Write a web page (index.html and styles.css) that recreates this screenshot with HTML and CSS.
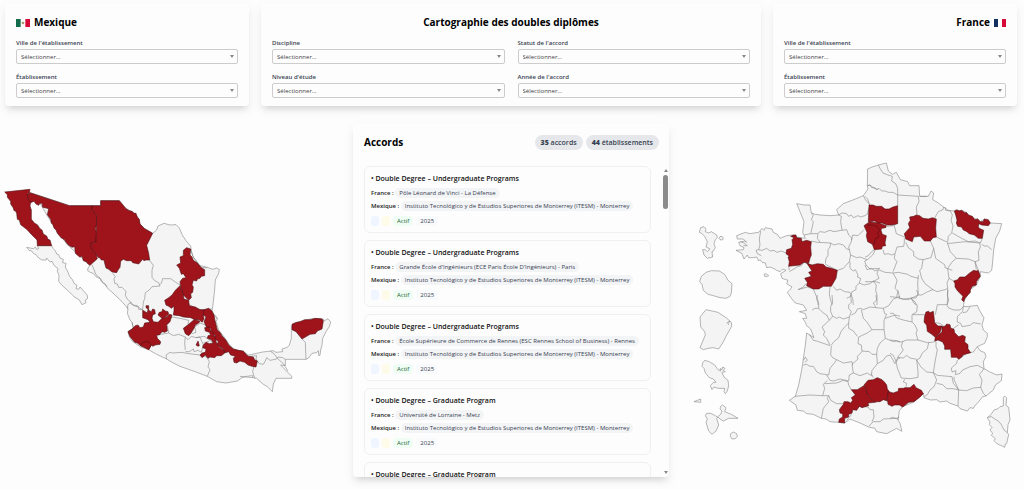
FILE: index.html
```html
<!DOCTYPE html>
<html lang="fr">
<head>
<meta charset="utf-8">
<title>Cartographie des doubles diplômes</title>
<link rel="stylesheet" href="styles.css">
</head>
<body>
<header class="filters">
  <section class="card">
    <h2 class="heading"><svg class="flag" viewBox="0 0 42 24"><path fill="#fff" d="M0 0h42v24H0z"/><path fill="#126b4b" d="M0 0h14v24H0z"/><path fill="#d60b39" d="M28 0h14v24H28z"/><circle cx="21" cy="12" r="4" fill="#a79a72"/></svg>Mexique</h2>
    <div class="fields">
      <div class="field"><label for="mv">Ville de l'établissement</label><select id="mv"><option>Sélectionner...</option></select></div>
      <div class="field"><label for="me">Établissement</label><select id="me"><option>Sélectionner...</option></select></div>
    </div>
  </section>
  <section class="card">
    <h1 class="heading heading-center">Cartographie des doubles diplômes</h1>
    <div class="fields fields-two">
      <div class="field"><label for="di">Discipline</label><select id="di"><option>Sélectionner...</option></select></div>
      <div class="field"><label for="st">Statut de l'accord</label><select id="st"><option>Sélectionner...</option></select></div>
      <div class="field"><label for="ni">Niveau d'étude</label><select id="ni"><option>Sélectionner...</option></select></div>
      <div class="field"><label for="an">Année de l'accord</label><select id="an"><option>Sélectionner...</option></select></div>
    </div>
  </section>
  <section class="card">
    <h2 class="heading heading-end">France<svg class="flag flag-fr" viewBox="0 0 36 24"><path fill="#fff" d="M0 0h36v24H0z"/><path fill="#12305f" d="M0 0h12v24H0z"/><path fill="#d60b39" d="M24 0h12v24H24z"/></svg></h2>
    <div class="fields">
      <div class="field"><label for="fv">Ville de l'établissement</label><select id="fv"><option>Sélectionner...</option></select></div>
      <div class="field"><label for="fe">Établissement</label><select id="fe"><option>Sélectionner...</option></select></div>
    </div>
  </section>
</header>
<main class="content">
  <svg class="map" viewBox="0 -168 1059 1059" role="img" aria-label="Carte du Mexique">
    <path class="land" d="M112 197L155 197 160 206 166 212 170 222 176 224 180 234 190 238 188 248 198 250 196 262 204 276 208 288 218 300 222 310 231 316 228 326 236 328 240 321 252 334 262 346 263 356 256 360 258 368 246 374 238 360 222 350 214 342 206 334 186 316 176 304 177 286 172 274 174 266 162 256 156 244 150 246 140 234 138 240 126 240 116 234 108 224 100 220 94 212 88 212 80 202 100 206 106 201 110 208 116 206Z"/>
    <path class="land" d="M90 38L208 77 302 77 302 62 358 62 378 86 402 98 414 112 420 132 434 146 458 160 470 150 474 138 492 130 510 135 528 134 538 144 547 165 558 182 565 190 572 198 574 214 580 232 592 246 598 256 622 262 638 268 650 264 658 268 656 280 646 300 643 340 638 380 636 394 646 410 652 418 648 424 656 450 672 470 688 494 702 507 710 510 730 515 746 525 770 520 788 516 806 514 820 512 828 517 848 515 846 507 862 502 868 495 874 475 874 440 880 430 900 425 930 417 960 415 970 417 972 423 984 416 992 426 988 440 978 455 968 475 966 495 962 510 960 526 956 526 955 512 950 518 936 520 926 534 918 538 856 538 856 557 842 555 875 589 875 595 828 595 820 612 817 635 802 620 790 613 770 595 758 593 758 587 740 589 726 593 712 603 678 609 650 605 622 589 580 573 540 559 516 547 500 537 470 523 446 509 422 501 396 483 388 470 384 455 400 445 396 427 390 420 382 400 384 386 366 365 342 342 320 322 316 312 304 304 300 296 288 290 280 280 272 278 263 272 264 264 270 256 200 192 152 124 120 70 82 44Z"/>
    <g class="border">
      <path d="M276 254L288 284 302 296 308 308 322 320M338 280L346 290 342 296 344 310 352 312 356 322 366 322 372 328 378 334 376 346 382 358 390 364 392 370 404 378 414 380 416 388 428 388M448 240L460 256 456 270 456 292 464 302 476 308 478 314 484 310 488 296 512 296 526 306 540 315M478 314L480 318 456 320 448 330 436 338 434 356 430 366 428 388"/>
      <g transform="translate(360 165)">
        <path d="M22 222L24 208 34 202 38 210 52 212 62 222 70 226M36 262L40 280 24 290M212 42L218 62 224 72 236 88 244 98 262 98M206 208L220 216 240 224 276 222M110 300L146 294 142 272M146 294L160 302 176 298 196 306 194 324 196 345M140 372L138 360 150 352 158 354 186 352 200 355 240 360 260 366 268 380 264 396 270 404 262 424M142 262L156 246 180 250 206 256 204 268M196 306L204 314 214 304 228 308 240 306 250 330 244 352 234 346 222 350 220 342 208 350 196 350M216 296L228 292 224 276 240 264 262 272M228 308L252 304 262 310 280 324M250 324L268 318M402 392L398 410 404 430M360 424L398 428M390 364L410 362 408 372 418 386 430 388 436 378 440 368 450 376 470 372 474 366 488 368 496 373M450 348L462 356 472 370 490 386 504 408M546 312L556 322 558 373M284 240L290 246 292 252"/>
      </g>
    </g>
    <g class="active">
      <path d="M14 36L90 28 88 38 82 42 84 56 92 66 90 78 94 90 94 118 104 130 112 134 120 146 126 150 130 162 140 168 144 178 150 180 155 197 112 197 111 180 95 164 80 148 62 134 58 120 52 118 50 100 46 92 42 92 40 84 32 72 32 64 22 52 22 44Z"/>
      <path d="M90 38L208 77 276 77 276 88 290 106 290 134 286 146 290 158 288 186 274 188 272 196 278 212 288 222 292 236 270 256 262 250 260 246 250 242 246 228 240 232 226 220 224 200 216 202 204 194 192 178 184 174 172 160 168 150 162 144 158 132 154 130 152 118 142 104 146 86 138 84 128 82 126 70 120 70 116 76 108 72 102 64 92 68 84 56 82 44Z"/>
      <path d="M276 77L302 77 302 62 358 62 378 86 388 92 396 94 402 100 408 100 412 112 418 118 420 132 434 146 458 160 450 176 440 196 446 220 449 240 438 240 432 242 428 238 416 252 398 248 394 242 380 242 370 238 362 244 360 262 354 270 350 278 336 276 326 268 318 264 314 250 312 240 304 240 300 234 294 232 288 222 278 212 272 196 274 188 288 186 290 106 276 88Z"/>
      <g transform="translate(360 165)">
        <path d="M190 46L200 38 212 42 210 60 216 66 220 76 232 84 244 98 254 104 254 122 244 124 240 130 232 132 230 138 220 136 216 150 220 156 218 172 212 176 214 188 206 196 190 180 182 154 180 140 188 130 198 128 190 116 184 118 178 100 170 90 182 84 180 66 190 62Z"/>
        <path d="M134 196L146 188 156 180 166 166 180 152 184 162 190 180 192 192 206 196 208 212 226 216 240 224 250 224 258 228 250 240 252 252 246 262 238 254 224 254 212 248 190 246 178 242 160 240 162 226 162 214 154 220 146 214 138 210Z"/>
        <path d="M252 224L266 220 276 228 282 240 284 252 292 285 300 292 306 302 318 316 326 330 340 342 356 346 370 348 380 360 386 364 400 366 404 374 412 378 408 396 396 394 384 390 374 382 360 378 350 384 342 382 340 370 346 364 332 360 326 350 314 354 310 342 300 336 290 326 296 320 282 310 286 300 276 294 272 280 260 278 252 260 258 246 250 240Z"/>
        <path d="M190 280L206 268 222 254 240 258 236 264 226 270 222 280 212 296 206 302 196 296Z"/>
        <path d="M250 330L258 322 268 326 280 324 274 314 262 310 264 302 272 300 268 292 256 288 254 278 266 276 272 286 280 294 286 310 290 326 300 338 312 346 314 354 304 362 290 362 284 368 270 366 264 370 256 360 246 368 240 360 246 354 256 352 258 342 248 338Z"/>
        <path d="M234 318L238 332 234 334 228 330Z"/>
        <path d="M68 226L76 230 82 234 84 222 78 218 78 212 86 212 86 226 94 230 98 222 104 224 106 236 98 240 96 250 100 260 114 262 126 250 140 246 148 238 156 240 150 260 140 270 142 288 134 292 126 290 118 300 110 300 112 310 122 320 120 328 106 330 98 334 94 330 86 344 74 334 62 332 52 324 44 322 36 312 30 305 24 290 36 282 46 272 54 270 60 278 70 276 74 264 90 262 84 254 68 248Z"/>
        <path d="M114 240L118 232 126 230 128 222 136 228 144 230 146 238 136 246 126 250Z"/>
        <path d="M62 332L66 324 78 320 86 320 94 330 86 344Z"/>
        <path d="M516 268L530 262 540 260 554 254 570 254 586 250 606 252 610 258 606 282 592 288 586 296 570 298 560 304 546 312 528 290 516 284Z"/>
      </g>
    </g>
  </svg>

  <section class="card panel">
    <div class="panel-head">
      <h2 class="panel-title">Accords</h2>
      <span class="count"><b>35</b> accords</span>
      <span class="count"><b>44</b> établissements</span>
    </div>
    <div class="panel-body">
      <ul class="list">
        <li class="item"><h3>• Double Degree – Undergraduate Programs</h3>
          <p><b>France :</b> <span class="school">Pôle Léonard de Vinci - La Défense</span></p>
          <p><b>Mexique :</b> <span class="school">Instituto Tecnológico y de Estudios Superiores de Monterrey (ITESM) - Monterrey</span></p>
          <div class="tags"><i class="tag blue"></i><i class="tag yellow"></i><span class="tag green">Actif</span><span class="tag year">2025</span></div></li>
        <li class="item"><h3>• Double Degree – Undergraduate Programs</h3>
          <p><b>France :</b> <span class="school">Grande École d'Ingénieurs (ECE Paris École D'Ingénieurs) - Paris</span></p>
          <p><b>Mexique :</b> <span class="school">Instituto Tecnológico y de Estudios Superiores de Monterrey (ITESM) - Monterrey</span></p>
          <div class="tags"><i class="tag blue"></i><i class="tag yellow"></i><span class="tag green">Actif</span><span class="tag year">2025</span></div></li>
        <li class="item"><h3>• Double Degree – Undergraduate Programs</h3>
          <p><b>France :</b> <span class="school">École Supérieure de Commerce de Rennes (ESC Rennes School of Business) - Rennes</span></p>
          <p><b>Mexique :</b> <span class="school">Instituto Tecnológico y de Estudios Superiores de Monterrey (ITESM) - Monterrey</span></p>
          <div class="tags"><i class="tag blue"></i><i class="tag yellow"></i><span class="tag green">Actif</span><span class="tag year">2025</span></div></li>
        <li class="item"><h3>• Double Degree – Graduate Program</h3>
          <p><b>France :</b> <span class="school">Université de Lorraine - Metz</span></p>
          <p><b>Mexique :</b> <span class="school">Instituto Tecnológico y de Estudios Superiores de Monterrey (ITESM) - Monterrey</span></p>
          <div class="tags"><i class="tag blue"></i><i class="tag yellow"></i><span class="tag green">Actif</span><span class="tag year">2025</span></div></li>
        <li class="item"><h3>• Double Degree – Graduate Program</h3></li>
      </ul>
      <div class="scrollbar" aria-hidden="true"><span class="arrow up"></span><span class="thumb"></span><span class="arrow down"></span></div>
    </div>
  </section>

  <svg class="map" viewBox="-63 -93 1065 1059" role="img" aria-label="Carte de la France">
    <path class="land" d="M533 42L546 36 560 32 565 30 589 24 595 48 607 58 619 52 631 74 653 80 659 92 687 92 689 124 715 124 723 108 731 114 728 134 745 144 761 156 775 166 793 168 815 166 829 172 847 192 863 192 871 200 883 192 901 204 935 206 929 228 917 250 911 285 907 330 905 346 895 354 871 350 871 364 859 390 841 404 823 436 820 455 840 454 862 451 868 465 882 489 876 509 880 525 892 535 892 545 884 565 862 575 870 587 884 593 888 605 880 620 882 641 898 650 920 660 936 657 934 677 916 690 910 705 888 723 878 725 862 745 856 750 850 760 840 758 832 768 810 761 804 753 780 745 770 738 750 741 740 734 722 735 702 728 700 715 672 741 638 755 628 767 624 795 630 805 636 829 620 820 590 836 560 830 555 820 536 816 510 804 480 792 464 804 446 802 420 800 408 792 394 790 370 778 350 776 340 768 322 766 318 750 298 736 316 724 326 690 336 640 346 570 350 534 372 548 362 522 350 512 346 502 338 490 350 490 346 476 328 470 350 466 340 450 316 444 304 430 292 412 300 404 306 396 290 386 294 376 276 370 272 356 288 346 278 342 270 350 260 346 254 342 240 336 230 338 226 324 216 322 210 314 206 318 200 306 190 308 176 308 172 300 162 312 156 296 138 286 160 284 162 278 150 272 146 262 164 258 170 262 160 252 142 252 140 242 166 232 180 236 206 232 216 220 222 226 226 218 246 222 250 232 262 238 270 250 290 242 310 240 320 246 346 250 338 232 342 200 330 170 320 146 344 150 360 150 364 174 376 178 390 180 420 182 446 180 440 164 460 146 496 132 520 122 534 102 532 92Z"/>
    <g class="border">
      <g transform="translate(120)">
        <path d="M92 228L88 252 90 270 86 284 78 286 82 296 94 302M86 284L96 286 110 280 120 288 132 286 140 292 154 288 168 294M176 334L178 346M178 350L192 342 200 336 214 332 222 322 236 326M302 264L300 276 294 284 294 302 288 310 286 326M244 258L262 262 302 264M244 174L250 180 244 194 250 200 246 220 242 236 222 240M242 236L262 236 270 230 284 232 300 226 312 230 334 226M264 236L262 250 270 262M334 226L350 224 356 240 366 250 364 260 356 276 362 300M302 264L312 270 326 266 340 270 350 282 358 284M362 300L358 320 340 340 322 346 286 328M326 180L334 184 332 200 336 226M326 180L336 174 350 176 356 184 364 180 370 188 384 182 392 186 404 182 412 178 416 160M402 224L384 242 368 240 364 256M362 300L380 308 390 306 412 314 428 300 436 284M360 320L360 340 370 348 376 344 384 360 382 366 392 370 388 384 378 394 378 404 366 410 362 424 350 430M412 314L404 318 408 330 420 342 450 340M388 384L402 390 420 386 430 378 450 384M310 394L320 406 330 402 344 410 360 412 368 430 370 450M250 402L264 436 264 450M300 396L298 420 306 450M412 92L420 90 430 98 444 104M400 122L406 134 418 148M250 402L232 396 204 404M204 404L220 396 228 386"/>
      </g>
      <g transform="translate(525)">
        <path d="M40 30L46 42 54 54 64 58 82 64 80 78 92 86 98 100 98 120M8 92L14 90 20 98 30 98 34 104 42 100 50 108 60 108 70 112 84 112 98 120M98 120L130 122 160 124M0 124L8 132 14 150M98 120L98 152M98 200L88 212 94 236 118 246M66 214L88 212M160 124L162 140 154 156 156 180M208 190L220 170 234 164 236 156M164 124L186 124M240 156L242 166 256 168 262 180 258 196 264 212 260 234 250 244 248 262 214 246M262 234L290 250 310 260 330 258 346 264 352 250M122 262L130 278 146 290 146 302 160 312 174 314 198 308 206 280 196 258M118 250L118 262 116 274 96 276 90 296 80 300 70 296 58 298 54 284M0 306L10 302 20 290 28 284M90 296L88 310 96 320 84 350M0 330L6 344 20 340 30 348 40 344 60 352 84 354M206 280L212 310 240 330 240 338 262 346M174 314L170 340 164 346 170 370 180 386 204 404M84 354L100 352 128 358 138 364 160 370M84 354L96 376 90 400 100 410 104 430 130 434 138 430 160 420 158 384 160 360M262 320L248 340 252 370 246 384 248 400 240 404 216 410 204 404 188 410 170 420 160 420M248 400L248 430 246 450M262 320L274 310 310 312 330 320 334 344M248 266L256 290 274 310M246 266L300 260 344 264 346 276 340 290 342 316 330 320 334 330 340 346M350 268L360 274 366 272 380 284M266 378L252 370M0 380L26 380 34 390 32 406 36 420 36 450M40 344L36 356 42 370 24 380M138 432L150 440 154 450"/>
      </g>
      <g transform="translate(270 420)">
        <path d="M112 0L110 14 116 24 116 40 104 40 96 46M116 40L130 54 140 60 148 76 126 96 134 110 130 120 140 130 150 150M156 0L158 24 152 34 152 50 158 64 170 70 178 66 190 72 208 66 214 50 206 40 206 30 214 22 212 0M148 76L158 64M208 66L206 84 196 94 184 108 176 128 162 140 154 150M206 84L206 100 220 108 232 124M214 60L226 54 232 42 242 40 250 44 270 36 288 38 310 40 314 56 320 58 312 76 312 104M244 44L250 70 260 80 276 104 312 104M276 104L262 114 236 126M236 126L234 146 244 150 246 170 232 184 234 192 216 208M312 104L316 130 300 144 292 160 290 178 276 178 268 170 246 168M88 118L100 136 110 138 150 152M154 152L152 180 158 188 170 194 190 204 216 200 218 210M70 210L80 208 90 214 100 214 110 230 120 236 146 240 150 220 166 200 170 194M216 208L220 234 208 240 206 258 180 252 160 258 150 256 140 240M220 234L240 242 262 234 274 242 276 226 292 206 290 178M274 236L280 248M142 256L130 268 134 280 128 302M44 304L90 300 126 302 146 302 152 316 170 326 190 326M134 266L170 264 190 256 204 260 206 270 214 284M146 302L142 310 146 320 130 340 124 370M200 376L212 362 216 350M264 336L270 344 280 344 282 366 276 380M232 338L240 334 264 336M266 394L280 380 300 380 310 372 350 370 358 366M292 206L310 196 318 184 330 180 345 206 355 190 360 190M316 130L340 140 350 138 360 142M316 70L345 60 360 64M310 40L326 32 340 12 360 4M288 38L280 24 290 16 288 0M70 196L76 186 82 196 74 202"/>
      </g>
      <g transform="translate(600 405)">
        <path d="M0 20L20 22 24 0M64 24L72 40 82 46 80 66 66 74 66 96 74 104 82 120 78 130 84 150M20 22L40 28 64 24 78 24 84 12 80 0M0 70L10 70 20 84 40 90 66 96M68 74L104 74M0 150L20 152 34 156 50 150 84 150 112 158 132 156M116 158L112 176 96 190 90 204 80 210M38 154L34 170 40 180 24 200 18 214M0 190L10 196 18 214 22 234 34 264 60 266 84 262 84 244 80 210M24 202L40 204 50 196 60 204 80 208M44 268L40 276 50 280 48 290M80 210L92 230 110 246 130 248M138 156L138 170 142 180 136 210 130 248M130 248L142 256 186 260 190 280 206 300M130 248L140 270 132 290 120 300 112 314 102 320M140 280L158 284 170 296 190 296 206 300 204 348M206 300L230 302 250 294 272 292 280 310 288 318M272 294L276 270 268 254 282 236M192 260L192 268 206 300M202 210L200 220 184 234 186 246 198 242 196 254 210 250 218 240 240 230 262 226 282 236M262 170L250 186 230 190 206 208M136 74L142 44 170 44 176 54 192 60 210 60 220 50M172 44L176 30 172 16 174 0M220 50L218 64 202 80 202 96 212 100 216 110 240 106 250 98 272 102M218 68L230 66 240 50M134 98L150 100 160 108M206 104L190 116M0 385L8 382 26 388"/>
      </g>
    </g>
    <g class="active">
      <g transform="translate(120)">
        <path d="M190 240L198 240 200 248 214 250 216 260 230 256 244 260 242 276 244 300 240 310 236 324 222 322 210 330 176 334 178 320 174 306 178 304 168 296 170 284 184 280 188 268 186 254 192 248 182 244Z"/>
        <path d="M230 324L246 330 262 326 280 328 288 336 304 340 322 346 318 370 312 380 304 394 280 394 266 402 250 402 230 392 232 382 224 370 244 364 236 352 246 348Z"/>
      </g>
      <g transform="translate(525)">
        <path d="M12 150L24 150 34 154 50 154 60 162 72 162 84 156 98 152 98 206 82 210 66 210 50 204 40 206 30 198 10 200Z"/>
        <path d="M-3 212L14 200 40 204 64 212 62 218 50 220 48 226 52 238 64 242 60 264 62 272 52 274 50 282 28 284 22 268 8 260 4 242 6 232Z"/>
        <path d="M118 236L134 218 130 206 136 196 134 186 146 184 154 180 164 182 174 190 190 192 202 188 214 192 212 220 214 246 204 248 196 258 178 258 166 244 146 246 142 260 122 252Z"/>
        <path d="M268 168L276 164 282 168 290 166 300 174 304 172 310 180 322 184 330 194 338 192 346 200 354 200 358 192 370 194 376 204 370 212 350 210 342 206 340 214 342 220 356 226 352 250 340 250 328 240 312 236 306 230 294 224 290 216 278 214 274 204 276 196 272 180Z"/>
        <path d="M266 378L278 374 284 366 300 366 314 354 326 346 334 348 340 346 346 364 334 380 334 390 322 394 316 404 316 412 300 430 296 440 290 434 294 424 278 408 270 396 270 386Z"/>
        <path d="M6 210L24 210 38 216 44 226 38 234 42 246 32 250 26 270"/>
      </g>
      <g transform="translate(270 420)">
        <path d="M252 270L264 256 280 254 292 248 306 254 314 262 320 270 322 282 328 290 322 306 322 318 310 314 300 320 292 320 284 322 270 308 262 300 258 284Z"/>
        <path d="M214 284L232 284 252 272 258 284 262 300 270 308 284 322 264 324 266 332 246 338 238 334 230 346 218 344 216 354 206 358 206 366 194 370 194 384 176 382 178 372 188 366 188 356 180 354 178 344 190 328 192 320 204 320 212 324 218 316 214 308 226 300Z"/>
        <path d="M324 290L340 294 350 290 354 290 356 280 362 280 370 280 374 278 390 278 402 268 408 278 424 286 430 296 420 306 402 320 386 322 368 336 358 330 344 330 336 334 324 328 322 310Z"/>
      </g>
      <g transform="translate(600 405)">
        <path d="M108 66L116 64 120 68 130 64 134 98 144 108 156 108 150 128 136 142 124 132 112 124 110 106 102 96 104 78Z"/>
        <path d="M136 142L156 126 156 110 166 108 170 102 180 104 182 114 192 118 194 128 206 140 218 136 226 140 224 156 234 164 234 176 242 188 220 194 216 200 206 208 200 202 184 202 182 178 164 178 164 168 158 156 144 150 134 154Z"/>
      </g>
    </g>
    <path class="land" transform="translate(600 405)" d="M340 322L344 318 350 324 348 346 356 352 360 390 354 404 352 428 356 434 350 460 346 462 344 472 332 466 322 462 312 452 316 446 304 436 308 430 300 420 306 412 298 404 300 396 292 384 304 372 312 360 324 356 330 350 340 348ZM292 382L304 380 316 388 326 394 334 404 342 420 352 428"/>
    <g class="land" transform="translate(0 180)">
      <path d="M32 38L42 35 48 42 46 50 56 54 64 50 80 60 82 68 76 74 72 86 76 98 70 108 66 110 68 126 52 130 42 120 38 104 46 104 52 110 60 102 48 96 52 80 44 64 36 56 28 52ZM90 65L96 64 100 69 97 75 90 74 87 70Z"/>
      <path d="M48 172L64 167 88 168 104 178 114 196 126 206 124 234 120 244 108 250 90 248 70 242 54 238 40 226 36 208 29 200 34 184Z"/>
      <path d="M48 284L84 292 108 308 124 322 125 334 108 364 98 384 86 402 70 398 54 400 40 404 30 398 46 360 44 350 32 336 30 306ZM110 324L120 318 114 326 116 330"/>
      <path d="M38 444L44 436 58 440 74 450 84 464 92 468 90 460 96 464 98 456 105 460 100 466 106 470 96 472 102 486 114 496 116 512 112 528 106 536 102 530 104 520 84 520 72 516 66 524 61 512 70 502 78 502 70 492 58 488 46 474 42 460 36 454Z"/>
      <path d="M12 560L32 552 32 562ZM92 574L98 570 108 578 104 590 124 598 144 610 116 610 100 618 90 612 84 606 80 610 86 630 78 648 66 658 56 648 48 622 52 612 46 602 50 595 62 595 76 602 82 606 92 598 96 588 90 582ZM122 656L130 651 140 656 142 664 136 671 126 672 121 664Z"/>
      <path d="M222 178L228 176 236 182 230 185 224 184ZM150 80L162 84 172 92 160 92"/>
    </g>
  </svg>
</main>
</body>
</html>
```
FILE: styles.css
```css
* { box-sizing: border-box; }
body {
  margin: 0;
  background: #fdfdfd;
  color: #111;
  font-family: "Segoe UI", "Open Sans", "Noto Sans", sans-serif;
  font-size: 6px;
  line-height: 10px;
  overflow: hidden;
}
h1, h2, h3, p, ul { margin: 0; padding: 0; }
.filters {
  display: grid;
  grid-template-columns: 244fr 500fr 244fr;
  gap: 12px;
  padding: 4px 7px 0 5px;
}
.card {
  background: #fdfdfd;
  border-radius: 4px;
  box-shadow: 0 5px 7px -3px rgba(0, 0, 0, .18), 0 4px 8px 5px rgba(0, 0, 0, .02);
}
.filters .card { padding: 11px 11px 8px; }
.heading {
  display: flex;
  align-items: center;
  gap: 4px;
  font-size: 10px;
  line-height: 15px;
  font-weight: 700;
  color: #000;
}
.heading-center { justify-content: center; }
.heading-end { justify-content: flex-end; }
.flag { width: 14px; height: 8px; }
.flag-fr { width: 12px; }
.fields { display: grid; gap: 9px 13px; padding-top: 9px; }
.fields-two { grid-template-columns: 1fr 1fr; }
.field { display: flex; flex-direction: column; }
.field label {
  font-weight: 600;
  line-height: 8px;
  padding-bottom: 2px;
  color: #374151;
}
.field select {
  appearance: none;
  width: 100%;
  height: 15px;
  padding: 0 4px;
  border: 1px solid #ccc;
  border-radius: 2px;
  font: inherit;
  color: #444;
  background: #fdfdfd url("data:image/svg+xml,%3Csvg xmlns='http://www.w3.org/2000/svg' viewBox='0 0 4 3'%3E%3Cpath d='M0 0h4L2 3z' fill='%23888'/%3E%3C/svg%3E") no-repeat right 3px center / 4px 3px;
}
.content {
  display: grid;
  grid-template-columns: 353fr 316fr 355fr;
  padding: 18px 0 12px;
}
.map { width: 100%; height: 353px; display: block; }
.land, .border { stroke: #808080; stroke-width: 1.7; stroke-linejoin: round; }
.land { fill: #f4f4f4; }
.border { fill: none; }
.active { fill: #9f131b; stroke: #4a1013; stroke-width: 1.7; stroke-linejoin: round; }
.panel {
  display: flex;
  flex-direction: column;
  height: 353px;
  min-width: 0;
  padding: 11px 0 0 11px;
}
.panel-head { display: flex; align-items: center; gap: 3px; padding-right: 10px; height: 15px; }
.panel-title { flex: 1; font-size: 10px; line-height: 15px; color: #000; }
.count {
  padding: 0 6px;
  border-radius: 8px;
  background: #e5e7eb;
  color: #374151;
  font-size: 7px;
  font-weight: 600;
  line-height: 15px;
}
.panel-body { display: flex; flex: 1; min-height: 0; padding-top: 16px; }
.list {
  flex: 1;
  min-width: 0;
  overflow: hidden;
  list-style: none;
  display: flex;
  flex-direction: column;
  gap: 7px;
}
.item {
  flex: none;
  height: 67px;
  padding: 7px 6px 6px;
  border: 1px solid #f0f0f1;
  border-radius: 6px;
}
.item h3 { font-size: 7px; line-height: 9px; font-weight: 600; padding-bottom: 4px; }
.item p { line-height: 13px; white-space: nowrap; color: #222; }
.item b { font-weight: 600; }
.school { padding: 1px 4px; border-radius: 5px; background: #f3f4f6; color: #374151; }
.tags { display: flex; gap: 3px; padding-top: 3px; }
.tag { height: 10px; min-width: 8px; border-radius: 3px; line-height: 10px; }
.blue { background: #eff6ff; }
.yellow { background: #fefce8; }
.green, .year { padding: 0 4px; }
.green { background: #f0fdf4; color: #166534; }
.year { background: #f9fafb; color: #374151; }
.scrollbar {
  width: 5px;
  margin: 3px 1px 3px 12px;
  display: flex;
  flex-direction: column;
  align-items: center;
}
.thumb { width: 5px; height: 34px; border-radius: 3px; background: #8b8b8b; margin: 3px 0 auto; }
.arrow { border: 2px solid transparent; }
.up { border-top: 0; border-bottom: 3px solid #888; }
.down { border-bottom: 0; border-top: 3px solid #888; }
```
